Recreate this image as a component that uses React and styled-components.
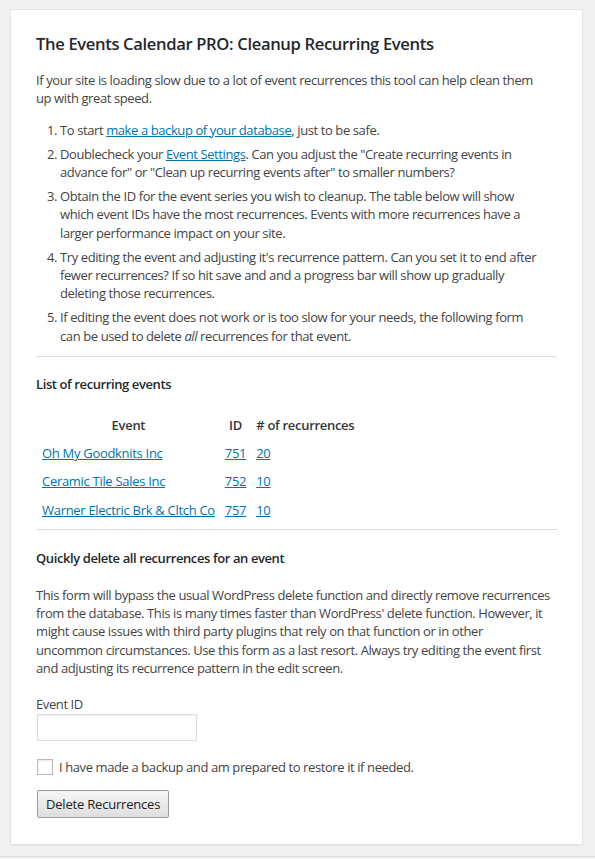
import React from "react";
import styled, { createGlobalStyle } from "styled-components";

const Global = createGlobalStyle`
  html, body {
    margin: 0;
    padding: 0;
    background: #f1f1f1;
  }
  body {
    font-family: "Open Sans", "Noto Sans", sans-serif;
    font-size: 13px;
    line-height: 1.4em;
    letter-spacing: -0.4px;
    color: #444;
  }
`;

const Page = styled.div`
  padding: 9px 12px 11px 10px;
  min-height: 837px;
  box-sizing: border-box;
  border-bottom: 1px solid #dcdcdc;
`;

const Card = styled.div`
  background: #fff;
  border: 1px solid #e5e5e5;
  box-shadow: 0 1px 1px rgba(0, 0, 0, 0.04);
  padding: 22px 25px 26px 25px;
`;

const Title = styled.h2`
  margin: 0 0 16px;
  font-size: 16.6px;
  font-weight: 600;
  line-height: 1.4;
  letter-spacing: -0.35px;
  color: #23282d;
`;

const Para = styled.p`
  margin: 0 0 ${(p) => p.$mb || 13}px;
  padding-right: 7px;
`;

const Steps = styled.ol`
  margin: 0 0 11px;
  padding: 0 15px 0 24px;

  li {
    margin-bottom: 6px;
  }
`;

const Link = styled.a`
  color: #0073aa;
  text-decoration: underline;
`;

const Divider = styled.hr`
  border: 0;
  border-top: 1px solid #ddd;
  margin: 0;
`;

const Heading = styled.h4`
  margin: ${(p) => p.$mt || 18}px 0 ${(p) => p.$mb || 18}px;
  font-size: 13px;
  font-weight: 600;
  color: #23282d;
`;

const Table = styled.table`
  border-spacing: 2px;
  margin: 0 0 4px;
  letter-spacing: -0.3px;

  th {
    padding: 4px;
    font-weight: 600;
    color: #32373c;
  }

  td {
    padding: 4px;
  }
`;

const Label = styled.label`
  display: block;
  margin-bottom: 1px;
`;

const Input = styled.input`
  display: block;
  width: 160px;
  height: 27px;
  box-sizing: border-box;
  border: 1px solid #ddd;
  box-shadow: inset 0 1px 2px rgba(0, 0, 0, 0.07);
  margin: 0 0 17px 1px;
`;

const CheckRow = styled.label`
  display: flex;
  align-items: center;
  gap: 6px;
  margin: 0 0 13px 1px;
`;

const Box = styled.span`
  width: 16px;
  height: 16px;
  box-sizing: border-box;
  border: 1px solid #b4b9be;
  background: #fff;
  box-shadow: inset 0 1px 2px rgba(0, 0, 0, 0.1);
`;

const Button = styled.button`
  display: block;
  margin-left: 1px;
  height: 28px;
  padding: 0 8px;
  font-family: inherit;
  font-size: 13px;
  letter-spacing: -0.2px;
  color: #222;
  border: 1px solid #9a9a9a;
  border-radius: 2px;
  background: linear-gradient(#f6f6f6, #dedede);
`;

const events = [
  { name: "Oh My Goodknits Inc", id: 751, count: 20 },
  { name: "Ceramic Tile Sales Inc", id: 752, count: 10 },
  { name: "Warner Electric Brk & Cltch Co", id: 757, count: 10 },
];

export default function App() {
  return (
    <Page>
      <Global />
      <Card>
        <Title>The Events Calendar PRO: Cleanup Recurring Events</Title>
        <Para>
          If your site is loading slow due to a lot of event recurrences this
          tool can help clean them up with great speed.
        </Para>
        <Steps>
          <li>
            To start <Link href="#">make a backup of your database</Link>, just
            to be safe.
          </li>
          <li>
            Doublecheck your <Link href="#">Event Settings</Link>. Can you
            adjust the "Create recurring events in advance for" or "Clean up
            recurring events after" to smaller numbers?
          </li>
          <li>
            Obtain the ID for the event series you wish to cleanup. The table
            below will show which event IDs have the most recurrences. Events
            with more recurrences have a larger performance impact on your
            site.
          </li>
          <li>
            Try editing the event and adjusting it's recurrence pattern. Can
            you set it to end after fewer recurrences? If so hit save and and a
            progress bar will show up gradually deleting those recurrences.
          </li>
          <li>
            If editing the event does not work or is too slow for your needs,
            the following form can be used to delete <em>all</em> recurrences
            for that event.
          </li>
        </Steps>
        <Divider />
        <Heading $mb={17}>List of recurring events</Heading>
        <Table>
          <thead>
            <tr>
              <th>Event</th>
              <th>ID</th>
              <th># of recurrences</th>
            </tr>
          </thead>
          <tbody>
            {events.map((e) => (
              <tr key={e.id}>
                <td>
                  <Link href="#">{e.name}</Link>
                </td>
                <td>
                  <Link href="#">{e.id}</Link>
                </td>
                <td>
                  <Link href="#">{e.count}</Link>
                </td>
              </tr>
            ))}
          </tbody>
        </Table>
        <Divider />
        <Heading $mt={19} $mb={19}>
          Quickly delete all recurrences for an event
        </Heading>
        <Para $mb={18}>
          This form will bypass the usual WordPress delete function and
          directly remove recurrences from the database. This is many times
          faster than WordPress' delete function. However, it might cause
          issues with third party plugins that rely on that function or in
          other uncommon circumstances. Use this form as a last resort. Always
          try editing the event first and adjusting its recurrence pattern in
          the edit screen.
        </Para>
        <Label>Event ID</Label>
        <Input type="text" />
        <CheckRow>
          <Box />
          <span>I have made a backup and am prepared to restore it if needed.</span>
        </CheckRow>
        <Button>Delete Recurrences</Button>
      </Card>
    </Page>
  );
}
